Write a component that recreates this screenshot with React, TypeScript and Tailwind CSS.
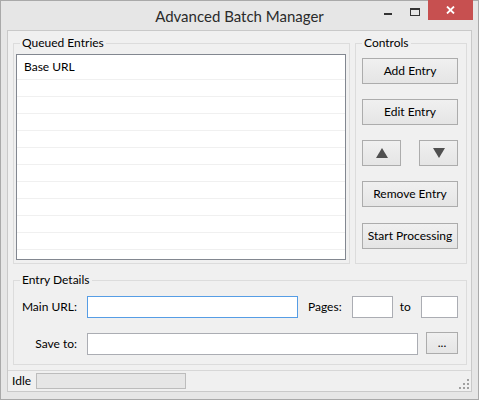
import React from 'react';

const font = { fontFamily: 'Lato, "Open Sans", sans-serif' };

const Btn = ({ children, className = '' }: { children?: React.ReactNode; className?: string }) => (
  <div
    className={`flex items-center justify-center border border-[#acacac] bg-gradient-to-b from-[#f0f0f0] to-[#e5e5e5] text-[12px] text-black ${className}`}
  >
    {children}
  </div>
);

const GroupBox = ({
  title,
  className = '',
  children,
}: {
  title: string;
  className?: string;
  children?: React.ReactNode;
}) => (
  <div className={`relative border border-[#dcdcdc] ${className}`}>
    <span className="absolute -top-[9px] left-[6px] bg-[#f0f0f0] px-[2px] text-[12px] leading-[16px] text-black">
      {title}
    </span>
    {children}
  </div>
);

export default function App() {
  const rows = Array.from({ length: 10 });

  return (
    <div style={font} className="relative flex h-[400px] w-[479px] flex-col border border-[#a9a9a9] bg-[#e6e6e6]">
      {/* title bar */}
      <div className="relative flex h-[29px] items-center justify-center">
        <span className="pt-[1px] text-[15px] text-[#2b2b2b]">Advanced Batch Manager</span>
        <div className="absolute right-[5px] top-[-1px] flex items-start">
          <div className="mr-[18px] mt-[13px] h-[2px] w-[8px] bg-[#333]" />
          <div className="mr-[8px] mt-[8px] h-[8px] w-[10px] border border-t-2 border-[#333]" />
          <div className="flex h-[20px] w-[45px] items-center justify-center bg-[#c75050]">
            <svg width="9" height="8" viewBox="0 0 9 8">
              <path d="M1 0.5 L8 7.5 M8 0.5 L1 7.5" stroke="#fff" strokeWidth="1.8" />
            </svg>
          </div>
        </div>
      </div>

      {/* client area */}
      <div className="relative mx-[6px] mb-[7px] flex flex-1 flex-col border border-[#c9c9c9] bg-[#f0f0f0]">
        <div className="flex gap-[5px] pl-[5px] pr-[4px] pt-[12px]">
          <GroupBox title="Queued Entries" className="h-[221px] w-[337px] pb-[3px] pl-[2px] pr-[3px] pt-[10px]">
            <div className="h-[206px] w-[330px] border border-[#828790] bg-white">
              <div className="flex h-[25px] items-center border-b border-[#f0f0f0] pl-[7px] text-[12px] text-black">
                Base URL
              </div>
              {rows.map((_, i) => (
                <div key={i} className="h-[17px] border-b border-[#f0f0f0]" />
              ))}
            </div>
          </GroupBox>

          <GroupBox title="Controls" className="flex h-[221px] w-[112px] flex-col pl-[6px] pt-[14px]">
            <Btn className="h-[26px] w-[96px]">Add Entry</Btn>
            <Btn className="mt-[15px] h-[26px] w-[96px]">Edit Entry</Btn>
            <div className="mt-[15px] flex w-[96px] justify-between">
              <Btn className="h-[26px] w-[39px]">
                <svg width="12" height="10" viewBox="0 0 12 10">
                  <path d="M6 0 L12 10 L0 10 Z" fill="#505050" />
                </svg>
              </Btn>
              <Btn className="h-[26px] w-[39px]">
                <svg width="12" height="10" viewBox="0 0 12 10">
                  <path d="M0 0 L12 0 L6 10 Z" fill="#505050" />
                </svg>
              </Btn>
            </div>
            <Btn className="mt-[15px] h-[26px] w-[96px]">Remove Entry</Btn>
            <Btn className="mt-[16px] h-[26px] w-[96px]">Start Processing</Btn>
          </GroupBox>
        </div>

        <div className="pl-[5px] pr-[4px] pt-[16px]">
          <GroupBox title="Entry Details" className="h-[85px] w-[454px] pt-[15px]">
            <div className="flex h-[22px] items-center text-[12px] text-black">
              <span className="w-[63px] text-right">Main URL:</span>
              <div className="ml-[10px] h-[22px] w-[211px] border border-[#569de5] bg-white" />
              <span className="ml-[10px]">Pages:</span>
              <div className="ml-[10px] h-[22px] w-[41px] border border-[#abadb3] bg-white" />
              <span className="ml-[7px]">to</span>
              <div className="ml-[10px] h-[22px] w-[37px] border border-[#abadb3] bg-white" />
            </div>
            <div className="mt-[15px] flex h-[22px] items-center text-[12px] text-black">
              <span className="w-[63px] text-right">Save to:</span>
              <div className="ml-[10px] h-[22px] w-[331px] border border-[#abadb3] bg-white" />
              <Btn className="-mt-[2px] ml-[8px] h-[22px] w-[32px]">...</Btn>
            </div>
          </GroupBox>
        </div>

        <div className="mt-[5px] h-px bg-[#d7d7d7]" />
        <div className="flex h-[20px] items-center pl-[4px] text-[12px] text-black">
          <span>Idle</span>
          <div className="ml-[5px] h-[16px] w-[150px] border border-[#bcbcbc] bg-[#e6e6e6]" />
        </div>

        {/* size grip */}
        <svg className="absolute bottom-[1px] right-[1px]" width="11" height="11" viewBox="0 0 11 11">
          <rect x="8" y="0" width="2" height="2" fill="#a0a0a0" />
          <rect x="4" y="4" width="2" height="2" fill="#a0a0a0" />
          <rect x="8" y="4" width="2" height="2" fill="#a0a0a0" />
          <rect x="0" y="8" width="2" height="2" fill="#a0a0a0" />
          <rect x="4" y="8" width="2" height="2" fill="#a0a0a0" />
          <rect x="8" y="8" width="2" height="2" fill="#a0a0a0" />
        </svg>
      </div>
    </div>
  );
}
